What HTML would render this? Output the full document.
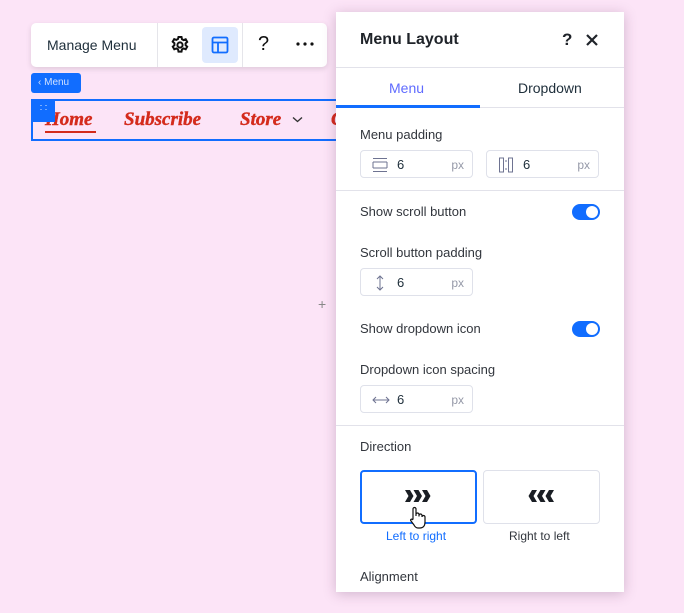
<!DOCTYPE html>
<html><head><style>
*{box-sizing:border-box;margin:0;padding:0}
body{width:684px;height:613px;background:#fce4f7;font-family:"Liberation Sans",sans-serif;position:relative;overflow:hidden;color:#20303c}
.a{position:absolute}
.t{font-size:13px;color:#32363d}
.inp{position:absolute;width:113px;height:28px;border:1px solid #dfe1ea;border-radius:4px;background:#fff}
.inp .v{position:absolute;left:36px;top:6px;font-size:13px;color:#20303c}
.inp .px{position:absolute;right:8px;top:7px;font-size:12px;color:#9599a8}
.inp svg{position:absolute;left:11px;top:6px}
.tog{position:absolute;width:28px;height:16px;border-radius:8px;background:#116dff}
.tog:after{content:"";position:absolute;right:2px;top:2px;width:12px;height:12px;border-radius:50%;background:#fff}
.hr{position:absolute;left:336px;width:288px;height:1px;background:#e2e2ea}
.nav{font-family:"Liberation Serif",serif;font-style:italic;font-weight:bold;font-size:19px;color:#d42b1c;-webkit-text-stroke:0.4px #d42b1c}
</style></head><body>
<div class="a" style="left:31px;top:23px;width:296px;height:44px;background:#fff;border-radius:5px;box-shadow:0 2px 6px rgba(0,0,0,.12)"></div>
<div class="a" style="left:47px;top:37px;font-size:14px;color:#20303c">Manage Menu</div>
<div class="a" style="left:157px;top:23px;width:1px;height:44px;background:#e5e5ea"></div>
<div class="a" style="left:242px;top:23px;width:1px;height:44px;background:#e5e5ea"></div>
<svg class="a" style="left:170px;top:35px" width="20" height="20" viewBox="0 0 20 20"><path d="M8.5 2h3l.5 2.2 1.6.9 2.1-.8 1.5 2.6-1.6 1.5v1.8l1.6 1.5-1.5 2.6-2.1-.8-1.6.9-.5 2.2h-3l-.5-2.2-1.6-.9-2.1.8-1.5-2.6 1.6-1.5V8.2L2.7 6.7l1.5-2.6 2.1.8L8 4z" fill="none" stroke="#111" stroke-width="2"/><circle cx="10" cy="10" r="2.6" fill="none" stroke="#111" stroke-width="2"/></svg>
<div class="a" style="left:202px;top:27px;width:36px;height:36px;background:#dfeafe;border-radius:4px"></div>
<svg class="a" style="left:211px;top:36px" width="18" height="18" viewBox="0 0 18 18"><rect x="1.5" y="1.5" width="15" height="15" rx="1.5" fill="none" stroke="#116dff" stroke-width="1.8"/><path d="M1.5 6.5h15M7 6.5v10" stroke="#116dff" stroke-width="1.8"/></svg>
<div class="a" style="left:258px;top:33px;font-size:20px;color:#111">?</div>
<svg class="a" style="left:296px;top:42px" width="18" height="4"><circle cx="2" cy="2" r="1.6" fill="#111"/><circle cx="9" cy="2" r="1.6" fill="#111"/><circle cx="16" cy="2" r="1.6" fill="#111"/></svg>
<div class="a" style="left:31px;top:73px;width:50px;height:20px;background:#116dff;border-radius:3px;color:#cfe0ff;font-size:10px;padding:4px 0 0 7px">‹ Menu</div>
<div class="a" style="left:31px;top:99px;width:310px;height:42px;border:2px solid #116dff;border-right:none"></div>
<div class="a nav" style="left:45px;top:109px">Home</div>
<div class="a" style="left:45px;top:131px;width:51px;height:1.5px;background:#d42b1c"></div>
<div class="a" style="left:32px;top:100px;width:23px;height:22px;background:#116dff;color:#fff;font-size:9px;text-align:center;line-height:9px;padding-top:3px">: :</div>
<div class="a nav" style="left:124px;top:109px">Subscribe</div>
<div class="a nav" style="left:240px;top:109px">Store</div>
<svg class="a" style="left:292px;top:116px" width="11" height="8"><path d="M1 1.5l4.5 4 4.5-4" fill="none" stroke="#333" stroke-width="1.4"/></svg>
<div class="a nav" style="left:331px;top:109px">C</div>
<div class="a" style="left:318px;top:296px;color:#888;font-size:14px">+</div>
<div class="a" style="left:336px;top:12px;width:288px;height:580px;background:#fff;box-shadow:0 2px 12px rgba(80,40,80,.25)"></div>
<div class="a" style="left:360px;top:31px;font-size:16px;font-weight:bold;color:#20242a">Menu Layout</div>
<div class="a" style="left:562px;top:30px;font-size:17px;font-weight:bold;color:#20242a">?</div>
<svg class="a" style="left:585px;top:33px" width="14" height="14"><path d="M2 2l10 10M12 2L2 12" stroke="#20242a" stroke-width="2.2"/></svg>
<div class="hr" style="top:67px"></div>
<div class="a" style="left:389px;top:80px;font-size:14px;color:#5f6bff">Menu</div>
<div class="a" style="left:518px;top:80px;font-size:14px;color:#20303c">Dropdown</div>
<div class="hr" style="top:107px"></div>
<div class="a" style="left:336px;top:105px;width:144px;height:3px;background:#116dff"></div>
<div class="a t" style="left:360px;top:127px">Menu padding</div>
<div class="inp" style="left:360px;top:150px"><svg width="16" height="16"><path d="M1 1.5h14M1 14.5h14M1 5h14M1 11h14M1 5v6M15 5v6" fill="none" stroke="#6e7391" stroke-width="1"/></svg><span class="v">6</span><span class="px">px</span></div>
<div class="inp" style="left:486px;top:150px"><svg width="16" height="16"><path d="M1.5 1h4v14h-4zM10.5 1h4v14h-4z" fill="none" stroke="#6e7391" stroke-width="1"/><path d="M8 3v2M8 11v2" stroke="#6e7391"/></svg><span class="v">6</span><span class="px">px</span></div>
<div class="hr" style="top:190px"></div>
<div class="a t" style="left:360px;top:204px">Show scroll button</div>
<div class="tog" style="left:572px;top:204px"></div>
<div class="a t" style="left:360px;top:245px">Scroll button padding</div>
<div class="inp" style="left:360px;top:268px"><svg width="16" height="16"><path d="M8 1v14M5 4l3-3 3 3M5 12l3 3 3-3" fill="none" stroke="#6e7391" stroke-width="1"/></svg><span class="v">6</span><span class="px">px</span></div>
<div class="a t" style="left:360px;top:321px">Show dropdown icon</div>
<div class="tog" style="left:572px;top:321px"></div>
<div class="a t" style="left:360px;top:362px">Dropdown icon spacing</div>
<div class="inp" style="left:360px;top:385px"><svg width="18" height="16"><path d="M1 8h16M4 5L1 8l3 3M14 5l3 3-3 3" fill="none" stroke="#6e7391" stroke-width="1"/></svg><span class="v">6</span><span class="px">px</span></div>
<div class="hr" style="top:425px"></div>
<div class="a t" style="left:360px;top:439px">Direction</div>
<div class="a" style="left:360px;top:470px;width:117px;height:54px;border:2px solid #116dff;border-radius:4px"></div>
<svg class="a" style="left:405px;top:490px" width="26" height="12"><path d="M0 0h5l3.5 6-3.5 6H0l3.5-6zM8.5 0h5l3.5 6-3.5 6h-5l3.5-6zM17 0h5l3.5 6-3.5 6h-5l3.5-6z" fill="#1a1e24"/></svg>
<div class="a" style="left:483px;top:470px;width:117px;height:54px;border:1px solid #dfe1ea;border-radius:4px"></div>
<svg class="a" style="left:528px;top:490px" width="26" height="12"><path d="M26 0h-5l-3.5 6 3.5 6h5l-3.5-6zM17.5 0h-5L9 6l3.5 6h5L14 6zM9 0H4L.5 6 4 12h5L5.5 6z" fill="#1a1e24"/></svg>
<svg class="a" style="left:408px;top:506px" width="20" height="24"><path d="M5 13V3a1.5 1.5 0 013 0v7V8.5a1.5 1.5 0 013 0v2-1a1.5 1.5 0 013 0v1.5a1.5 1.5 0 013 0V16c0 4-2 6-5 6h-2c-2 0-3-1-4-3l-3-4c-1-1.3.5-2.5 1.6-1.5z" fill="#fff" stroke="#111" stroke-width="1.2"/></svg>
<div class="a" style="left:386px;top:529px;font-size:12px;color:#116dff">Left to right</div>
<div class="a" style="left:509px;top:529px;font-size:12px;color:#32363d">Right to left</div>
<div class="a t" style="left:360px;top:569px">Alignment</div>
</body></html>
